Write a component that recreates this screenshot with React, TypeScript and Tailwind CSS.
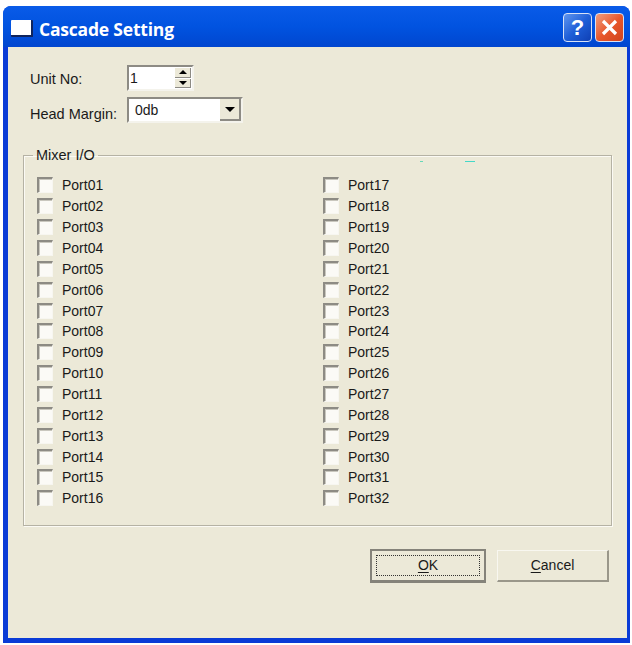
const FONT = "font-['Liberation_Sans',Arial,sans-serif]";

const left = Array.from({ length: 16 }, (_, i) => i + 1);
const right = Array.from({ length: 16 }, (_, i) => i + 17);

function pad(n: number) {
  return n < 10 ? `0${n}` : `${n}`;
}

function PortCheck({ n }: { n: number }) {
  return (
    <label className="flex items-center h-[20.87px]">
      <span className="w-[16px] h-[16px] bg-[#fbfaf6] border-l-2 border-t-2 border-[#8d8b84] border-r border-b border-r-[#f7f6f0] border-b-[#f7f6f0] shadow-[inset_1px_1px_0_#c9c7be]" />
      <span className="ml-[9px] text-[14px] leading-none text-[#1a1a1a]">Port{pad(n)}</span>
    </label>
  );
}

function TitleButton({ kind }: { kind: "help" | "close" }) {
  const bg =
    kind === "help"
      ? "bg-gradient-to-br from-[#5f95ee] via-[#1f5fd8] to-[#0f3fb4]"
      : "bg-gradient-to-br from-[#ee9c7c] via-[#e8582c] to-[#d0431c]";
  return (
    <div className={`w-[29px] h-[29px] rounded-[4px] border border-[#d8e2f6] flex items-center justify-center ${bg}`}>
      {kind === "help" ? (
        <span className="text-white font-bold text-[22px] leading-none">?</span>
      ) : (
        <svg width="17" height="17" viewBox="0 0 17 17">
          <path d="M2 2 L15 15 M15 2 L2 15" stroke="#fff" strokeWidth="3.2" />
        </svg>
      )}
    </div>
  );
}

export default function App() {
  return (
    <div className={`w-[632px] h-[645px] bg-white pt-[6px] pl-[3px] pr-[2px] pb-[2px] ${FONT}`}>
      <div className="w-full h-full flex flex-col rounded-t-[8px] bg-[#0a3bd6] overflow-hidden">
        {/* TITLE BAR */}
        <div className="h-[41px] flex items-center pl-[8px] pr-[6px] bg-gradient-to-b from-[#0a5be8] via-[#0153e0] to-[#0146cf]">
          <div className="w-[22px] h-[17px] mt-[3px] bg-white border-r-2 border-b-2 border-[#10245c] rounded-[1px]" />
          <span className="ml-[6px] mt-[6px] text-white font-bold text-[17.5px] leading-none font-['Open_Sans',sans-serif] tracking-[-0.2px]">
            Cascade Setting
          </span>
          <div className="ml-auto flex gap-[3px] pt-[2px]">
            <TitleButton kind="help" />
            <TitleButton kind="close" />
          </div>
        </div>

        {/* CLIENT AREA */}
        <div className="flex-1 ml-[5px] mr-[3px] mb-[5px] bg-[#ece9d8] pl-[15px] pr-[15px] pt-[18px] text-[14.5px] text-[#1a1a1a]">
          <div className="pl-[7px]">
            <div className="flex items-center h-[26px]">
              <span className="w-[97px] pt-[4px]">Unit No:</span>
              <div className="w-[67px] h-[26px] bg-white border-2 border-[#8d8b84] border-r-[#f4f3ec] border-b-[#f4f3ec] flex items-center pl-[1px] pr-[1px]">
                <span className="flex-1 text-[14px]">1</span>
                <div className="w-[16px] h-[20px] flex flex-col gap-[1px]">
                  <div className="flex-1 bg-[#ece9d8] border-r border-b border-[#8d8b84] flex items-center justify-center">
                    <span className="w-0 h-0 border-x-[4px] border-x-transparent border-b-[4px] border-b-black" />
                  </div>
                  <div className="flex-1 bg-[#ece9d8] border-r border-b border-[#8d8b84] flex items-center justify-center">
                    <span className="w-0 h-0 border-x-[4px] border-x-transparent border-t-[4px] border-t-black" />
                  </div>
                </div>
              </div>
            </div>
            <div className="flex items-center h-[26px] mt-[6px]">
              <span className="w-[97px] pt-[10px]">Head Margin:</span>
              <div className="w-[116px] h-[26px] bg-white border-2 border-[#8d8b84] border-r-[#f4f3ec] border-b-[#f4f3ec] flex items-center pl-[6px]">
                <span className="flex-1 text-[14px]">0db</span>
                <div className="w-[21px] h-[22px] bg-[#ece9d8] border-r-2 border-b-2 border-[#8d8b84] flex items-center justify-center">
                  <span className="w-0 h-0 border-x-[5px] border-x-transparent border-t-[5px] border-t-black" />
                </div>
              </div>
            </div>
          </div>

          {/* MIXER I/O */}
          <fieldset className="relative mt-[24px] h-[379px] border border-[#b5b2a4] shadow-[1px_1px_0_#fbfaf4,inset_1px_1px_0_#fbfaf4] pl-[13px]">
            <legend className="-ml-[4px] px-[3px] text-[14.5px] leading-[16px]">Mixer I/O</legend>
            <div className="absolute left-[396px] top-[-2px] w-[3px] h-[1px] bg-[#66d8b8]" />
            <div className="absolute left-[441px] top-[-2px] w-[10px] h-[1px] bg-[#44d8c8]" />
            <div className="grid grid-cols-[286px_1fr] pt-[12px]">
              <div>
                {left.map((n) => (
                  <PortCheck key={n} n={n} />
                ))}
              </div>
              <div>
                {right.map((n) => (
                  <PortCheck key={n} n={n} />
                ))}
              </div>
            </div>
          </fieldset>

          {/* BUTTONS */}
          <div className="flex justify-end items-center gap-[11px] mt-[23px] pr-[3px]">
            <button className="w-[116px] h-[34px] bg-[#ece9d8] border-2 border-[#85837a] border-b-[3px] p-[4px] text-[14px]">
              <span className="flex items-center justify-center h-full border border-dotted border-[#333]">
                <span className="underline underline-offset-2">O</span>K
              </span>
            </button>
            <button className="w-[112px] h-[32px] bg-[#ece9d8] border border-[#f8f7f0] border-r-2 border-b-2 border-r-[#9a978a] border-b-[#9a978a] text-[14px]">
              <span className="underline underline-offset-2">C</span>ancel
            </button>
          </div>
        </div>
      </div>
    </div>
  );
}
